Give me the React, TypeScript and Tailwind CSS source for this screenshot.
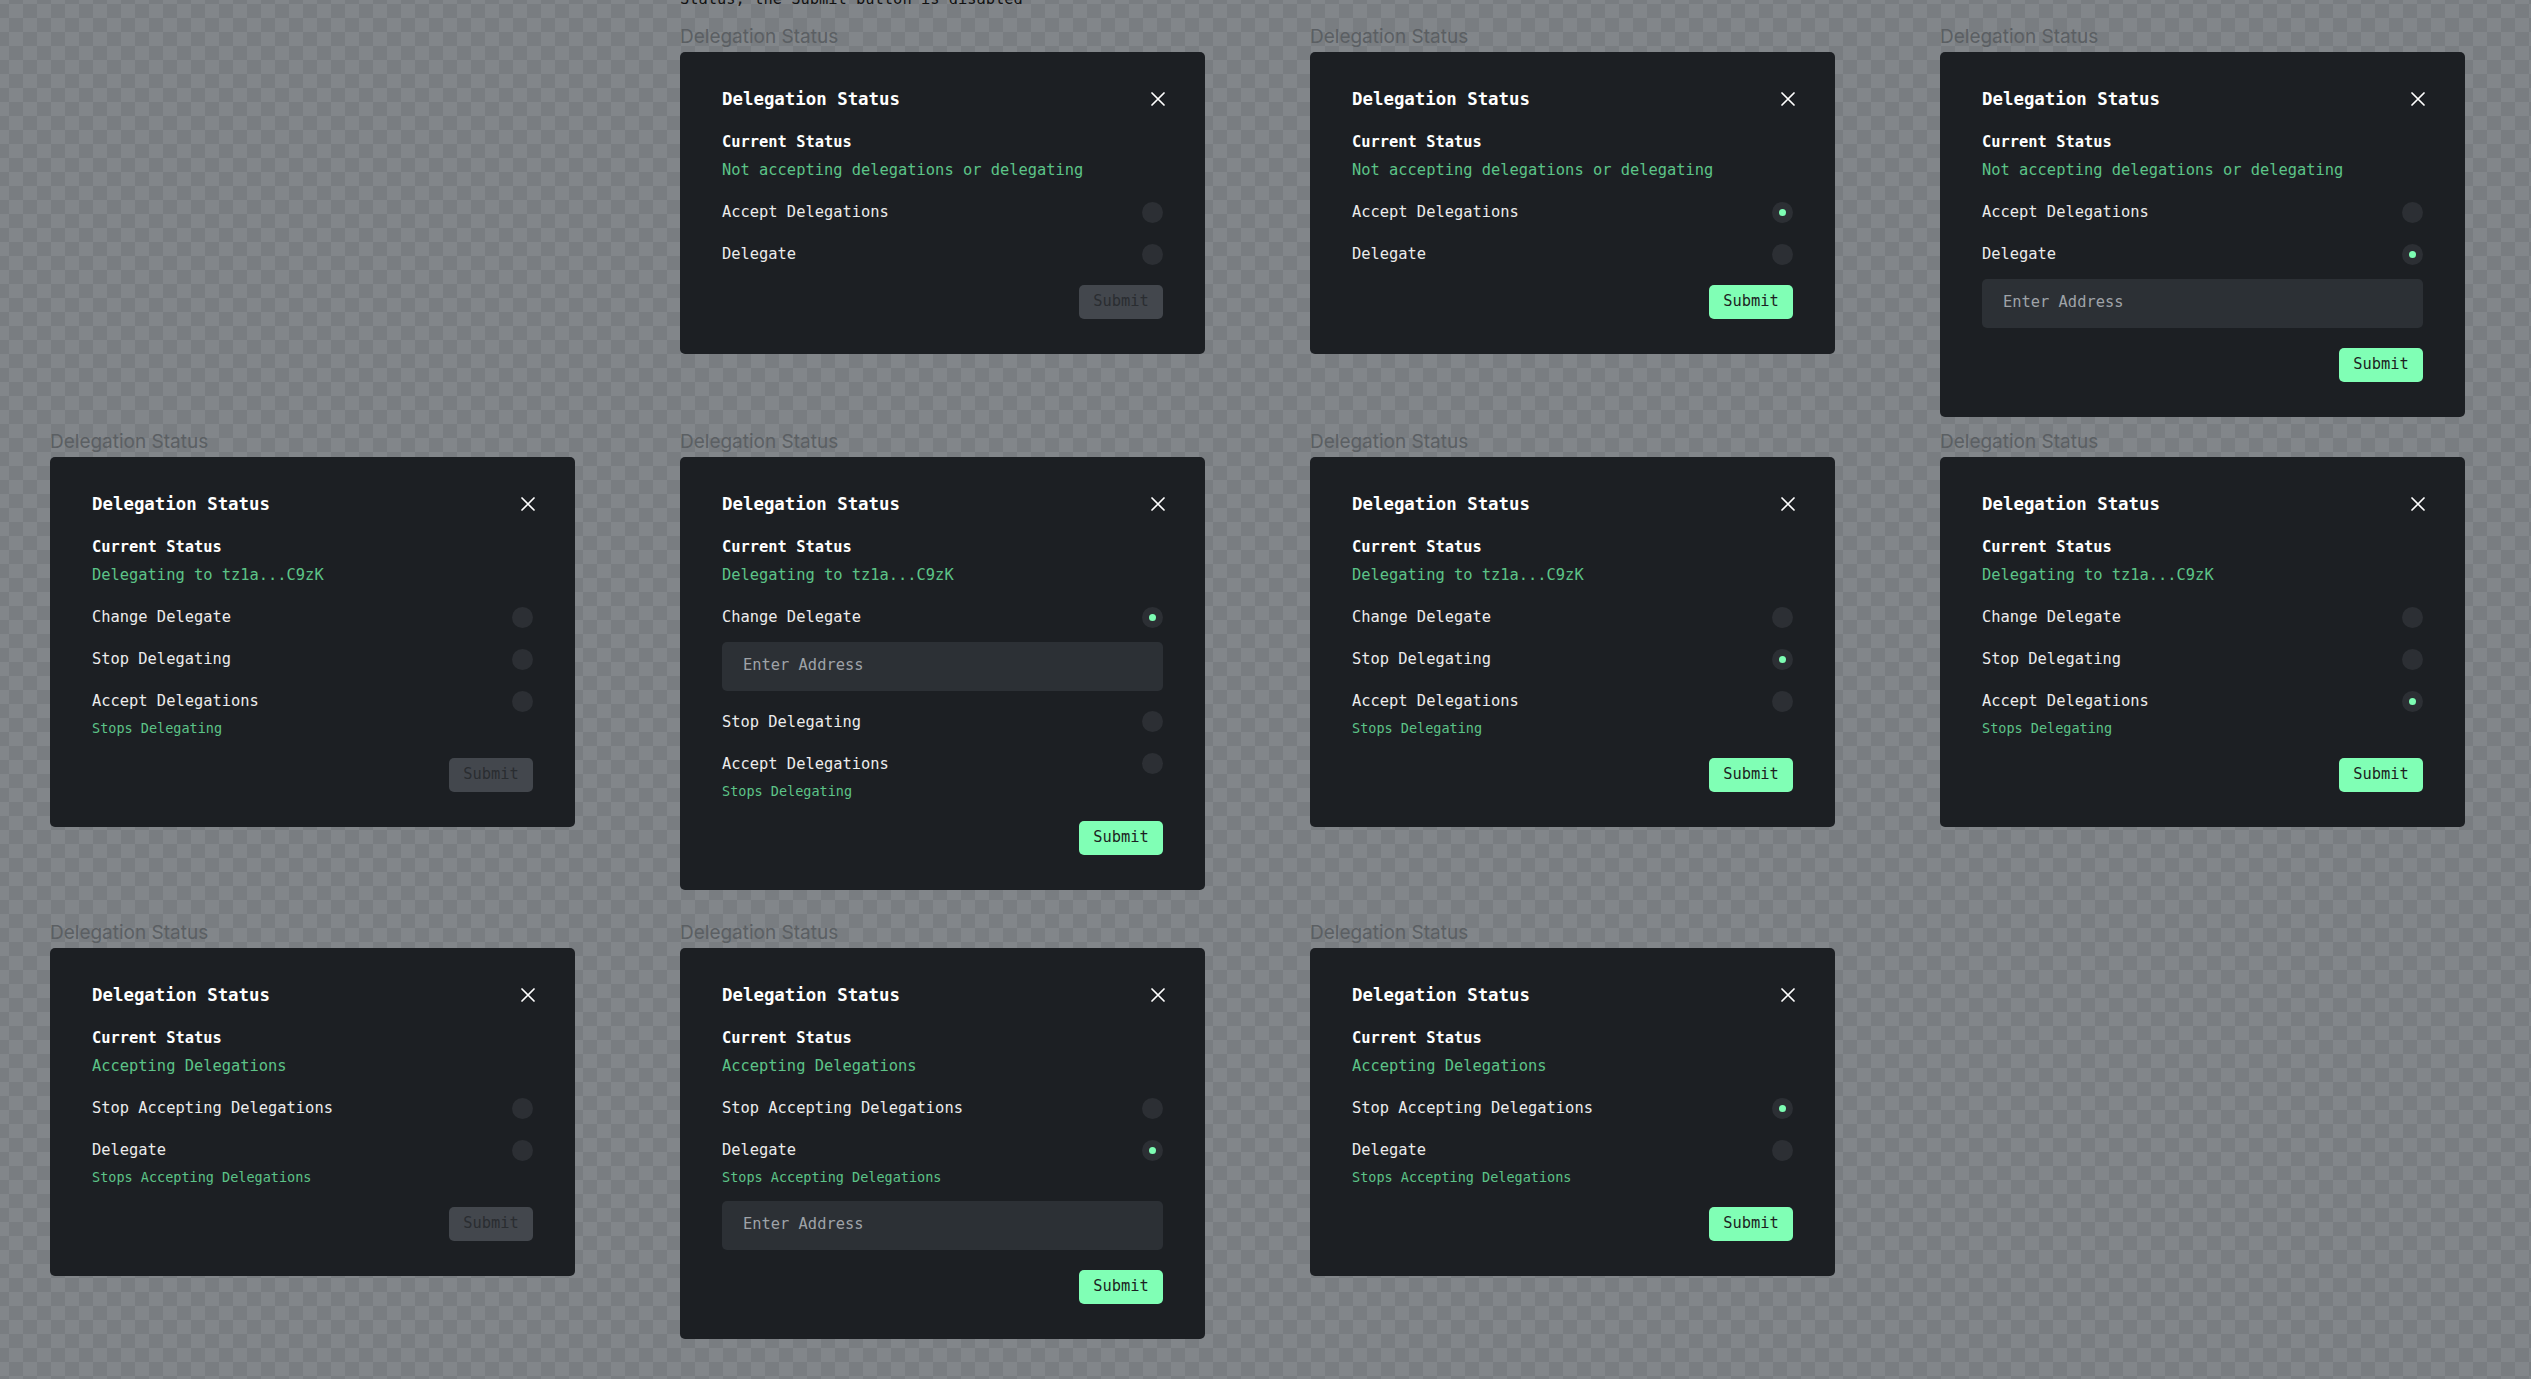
import React from "react";

type Opt = { label: string; note?: string };
type Variant = {
  status: string;
  options: Opt[];
  selected: number | null;
  input?: boolean;
};

const S1 = "Not accepting delegations or delegating";
const S2 = "Delegating to tz1a...C9zK";
const S3 = "Accepting Delegations";

const O1: Opt[] = [{ label: "Accept Delegations" }, { label: "Delegate" }];
const O2: Opt[] = [
  { label: "Change Delegate" },
  { label: "Stop Delegating" },
  { label: "Accept Delegations", note: "Stops Delegating" },
];
const O3: Opt[] = [
  { label: "Stop Accepting Delegations" },
  { label: "Delegate", note: "Stops Accepting Delegations" },
];

const rows: (Variant | null)[][] = [
  [
    null,
    { status: S1, options: O1, selected: null },
    { status: S1, options: O1, selected: 0 },
    { status: S1, options: O1, selected: 1, input: true },
  ],
  [
    { status: S2, options: O2, selected: null },
    { status: S2, options: O2, selected: 0, input: true },
    { status: S2, options: O2, selected: 1 },
    { status: S2, options: O2, selected: 2 },
  ],
  [
    { status: S3, options: O3, selected: null },
    { status: S3, options: O3, selected: 1, input: true },
    { status: S3, options: O3, selected: 0 },
  ],
];

function CloseIcon() {
  return (
    <svg width="14" height="14" viewBox="0 0 14 14" className="-mr-[2px]">
      <path d="M1 1 L13 13 M13 1 L1 13" stroke="#ffffff" strokeWidth="1.7" strokeLinecap="round" />
    </svg>
  );
}

function Radio({ on }: { on: boolean }) {
  return (
    <div className="w-[21px] h-[21px] rounded-full bg-[#2c2f34] flex items-center justify-center shrink-0">
      {on && <div className="w-[7px] h-[7px] rounded-full bg-[#7dfdb3]" />}
    </div>
  );
}

function Card({ v }: { v: Variant }) {
  const enabled = v.selected !== null;
  return (
    <div className="w-[525px] rounded-[5px] bg-[#1c1f23] px-[42px] py-[35px] flex flex-col gap-[20px] font-['DejaVu_Sans_Mono','Liberation_Mono',monospace]">
      <div className="h-[24px] flex items-center justify-between">
        <span className="text-[17.4px] leading-[24px] font-bold text-white">Delegation Status</span>
        <CloseIcon />
      </div>
      <div className="flex flex-col gap-[6px]">
        <span className="text-[15.4px] leading-[22px] font-bold text-white">Current Status</span>
        <span className="text-[15.4px] leading-[22px] text-[#5cc488]">{v.status}</span>
      </div>
      {v.options.map((o, i) => (
        <div key={i} className="flex flex-col">
          <div className="h-[22px] flex items-center justify-between">
            <span className="text-[15.4px] leading-[22px] text-[#ececec]">{o.label}</span>
            <Radio on={v.selected === i} />
          </div>
          {o.note && (
            <span className="mt-[7px] text-[13.5px] leading-[19px] text-[#5cc488]">{o.note}</span>
          )}
          {v.input && v.selected === i && (
            <div className="mt-[13.5px] h-[49px] rounded-[5px] bg-[#2c3035] px-[21px] flex items-center">
              <span className="text-[15.4px] text-[#9fa3a8]">Enter Address</span>
            </div>
          )}
        </div>
      ))}
      <div
        className={
          enabled
            ? "self-end w-[84px] h-[34px] rounded-[5px] bg-[#80ffb5] text-[#1c1f23] flex items-center justify-center text-[15.4px]"
            : "self-end w-[84px] h-[34px] rounded-[5px] bg-[#43474d] text-[#2a2d31] flex items-center justify-center text-[15.4px]"
        }
      >
        Submit
      </div>
    </div>
  );
}

function Cell({ v }: { v: Variant | null }) {
  if (!v) return <div />;
  return (
    <div className="flex flex-col gap-[3px]">
      <span className="text-[19px] leading-[24px] text-[#5b5f63] font-['Inter','Liberation_Sans',sans-serif]">
        Delegation Status
      </span>
      <Card v={v} />
    </div>
  );
}

export default function App() {
  return (
    <div className="min-h-screen w-full overflow-hidden flex flex-col bg-[conic-gradient(#797d81_25%,#82868a_0_50%,#797d81_0_75%,#82868a_0)] [background-size:28px_28px] [background-position:-5px_-10px]">
      <div className="-mt-[13px] h-[24px] pl-[680px] text-[15.4px] leading-[24px] text-[#111] font-['DejaVu_Sans_Mono','Liberation_Mono',monospace] whitespace-nowrap">
        Status, the Submit button is disabled
      </div>
      {rows.map((r, ri) => (
        <div
          key={ri}
          className={
            "grid grid-cols-[repeat(4,525px)] gap-x-[105px] pl-[50px] items-start " +
            (ri === 0 ? "mt-[14px]" : ri === 1 ? "mt-[13.5px]" : "mt-[31.5px]")
          }
        >
          {r.map((v, ci) => (
            <Cell key={ci} v={v} />
          ))}
        </div>
      ))}
    </div>
  );
}
